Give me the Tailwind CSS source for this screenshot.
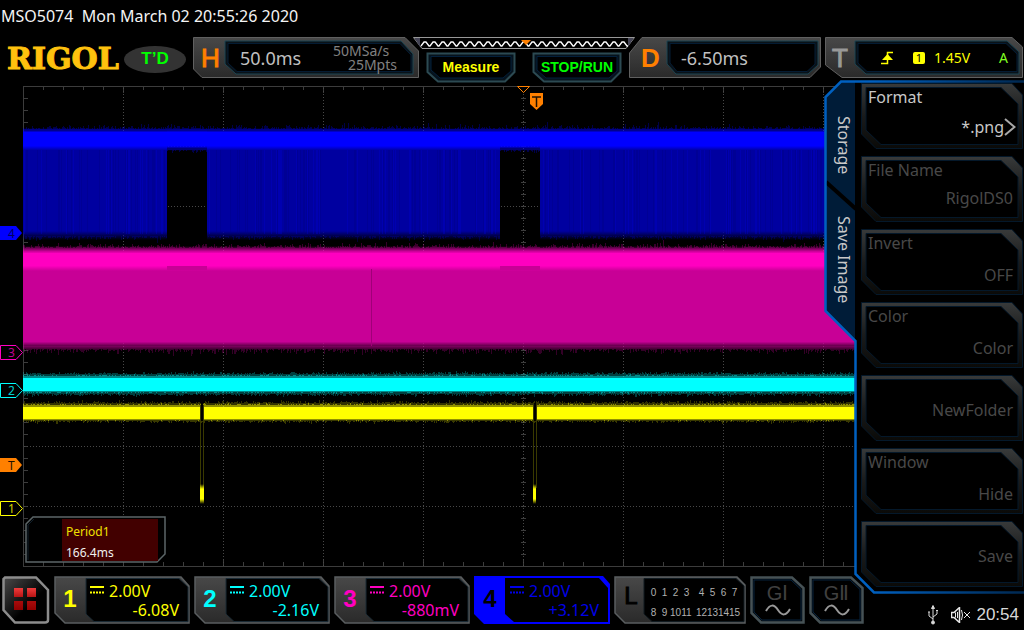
<!DOCTYPE html>
<html lang="en">
<head>
<meta charset="utf-8">
<title>RIGOL MSO5074</title>
<script src="https://cdn.jsdelivr.net/npm/@tailwindcss/browser@4"></script>
</head>
<body class="min-h-screen overflow-hidden bg-black font-['Noto_Sans',sans-serif] text-[#c8c8c8]">

<!-- Shared gradients and frames -->
<svg class="absolute h-0 w-0" aria-hidden="true">
  <defs>
    <linearGradient id="metal" x1="0" y1="0" x2="0" y2="1"><stop offset="0" stop-color="#484848"/><stop offset="1" stop-color="#2a2a2a"/></linearGradient>
    <linearGradient id="frame" x1="0" y1="0" x2="0" y2="1"><stop offset="0" stop-color="#383a3a"/><stop offset=".5" stop-color="#1a1b1b"/><stop offset="1" stop-color="#0a0a08"/></linearGradient>
    <linearGradient id="knob" x1="0" y1="0" x2="1" y2="1"><stop offset="0" stop-color="#4a4a4a"/><stop offset=".6" stop-color="#000"/><stop offset="1" stop-color="#000"/></linearGradient>
    <linearGradient id="tile" x1="0" y1="0" x2="0" y2="1"><stop offset="0" stop-color="#f03c3c"/><stop offset=".45" stop-color="#b01010"/><stop offset="1" stop-color="#900000"/></linearGradient>
    <symbol id="menuFrame" viewBox="0 0 162 66">
      <path d="M.5 .5H151L161.5 12V65.500H15L.5 51Z" fill="url(#frame)" stroke="#04182a"/>
      <path d="M5 4.500H140L157 21V61.500H20L5 47Z" fill="#000" stroke="#04182a"/>
    </symbol>
    <symbol id="chFrame" viewBox="0 0 136 48">
      <path d="M1 1H127L135 10V47H11L1 37Z" fill="url(#metal)" stroke="#5a5e60" stroke-width="1.500"/>
      <path d="M32 2.500H125L134 11V45.500H40L32 38Z" fill="#000" stroke="#1a2a34"/>
    </symbol>
    <symbol id="pill" viewBox="0 0 90 31">
      <path d="M1.500 1.500H88.500V20L79 29.500H12L1.500 20Z" fill="#06121c" stroke="#2c4a52" stroke-width="2"/>
      <path d="M5 4.500H85V19L77 26H14L5 18Z" fill="#000" stroke="#03203c"/>
    </symbol>
    <symbol id="genFrame" viewBox="0 0 55 48">
      <path d="M1.500 1.500H42L53.500 12V46.500H11L1.500 37Z" fill="#05090d" stroke="#465256" stroke-width="2.500"/>
      <path d="M4 4H41L51 13.500V44H12L4 36Z" fill="#000" stroke="#06223c"/>
    </symbol>
    <symbol id="dc" viewBox="0 0 14 8"><path d="M0 1H14" stroke="currentColor" stroke-width="2"/><path d="M0 6.500H14" stroke="currentColor" stroke-width="2" stroke-dasharray="2 1"/></symbol>
    <symbol id="sine" viewBox="0 0 26 12"><path d="M1 7C5 0 9 0 13 6S21 12 25 5" fill="none" stroke="#999" stroke-width="2"/></symbol>
  </defs>
</svg>

<header>
  <h1 class="h-[37px] whitespace-pre px-px pt-1 text-[16px] leading-6 text-[#f4f4f4]">MSO5074  Mon March 02 20:55:26 2020</h1>
  <div class="flex h-[43px] items-start">
    <div class="flex w-[193px] shrink-0 items-center pl-[7px] pt-2">
      <span class="w-[117px] font-['DejaVu_Serif',serif] text-[30px] font-bold leading-7 text-[#ffc20e] [-webkit-text-stroke:1px_#ffc20e]">RIGOL</span>
      <span class="flex h-[27px] w-[62px] items-center justify-center rounded-[50%] bg-[#333] font-['Liberation_Sans',sans-serif] text-[17px] font-bold text-[#00ff00]">T’D</span>
    </div>

    <button class="relative flex h-[41px] w-[226px] shrink-0 items-center text-left">
      <svg class="absolute inset-0 h-full w-full" viewBox="0 0 226 41"><path d="M.5 .5H212L225.500 14V40.500H9L.5 32Z" fill="url(#metal)" stroke="#606060"/><path d="M32 4H208L220 17V37H43L32 27Z" fill="#0a1218" stroke="#1c4452"/><path d="M35 6.500H207L218 18V34.500H44L35 26Z" fill="#000" stroke="#041c34"/></svg>
      <span class="relative w-[47px] pl-2 font-['Liberation_Sans',sans-serif] text-[26px] leading-8 text-[#ff8000] [-webkit-text-stroke:1px_#ff8000]">H</span>
      <span class="relative w-[93px] text-[18px] leading-6 text-[#c0c0c0]">50.0ms</span>
      <span class="relative flex w-[64px] flex-col text-[14px] leading-[14px] text-[#808080]"><span>50MSa/s</span><span class="text-right">25Mpts</span></span>
    </button>

    <div class="relative z-10 -mx-[6px] flex w-[222px] shrink-0 grow flex-col items-center">
      <svg class="h-[12px] w-[222px]" viewBox="0 0 222 12"><path d="M.5 .5H221.500L213 11.500H9Z" fill="#000" stroke="#989898"/><path d="M1.500 1H7V10ZM220.500 1H215V10Z" fill="#445"/><path id="zigzag" fill="none" stroke="#fff" stroke-width="1.300"/><path d="M108 3H118L113 8Z" fill="#ff8000"/></svg>
      <div class="flex w-[196px] justify-between pt-[3px] font-['Liberation_Sans',sans-serif] text-[14px]">
        <button class="relative h-[31px] w-[90px] font-bold text-[#ffff00]"><svg class="absolute inset-0 h-full w-full"><use href="#pill"/></svg><span class="relative">Measure</span></button>
        <button class="relative h-[31px] w-[90px] font-bold text-[#00ff00]"><svg class="absolute inset-0 h-full w-full"><use href="#pill"/></svg><span class="relative">STOP/RUN</span></button>
      </div>
    </div>

    <button class="relative flex h-[41px] w-[192px] shrink-0 items-center text-left">
      <svg class="absolute inset-0 h-full w-full" viewBox="0 0 192 41"><path d="M13 .5H191.500V30L181 40.500H.5V16Z" fill="url(#metal)" stroke="#606060"/><path d="M38 4H189V28L179 37H47L38 27Z" fill="#0a1218" stroke="#1c4452"/><path d="M41 6.500H186V27L178 34.500H48L41 26Z" fill="#000" stroke="#041c34"/></svg>
      <span class="relative w-[52px] pl-3 font-['Liberation_Sans',sans-serif] text-[26px] font-bold leading-8 text-[#ff8000]">D</span>
      <span class="relative text-[18px] leading-6 text-[#c0c0c0]">-6.50ms</span>
    </button>

    <button class="relative ml-1 mr-px flex h-[41px] w-[198px] shrink-0 items-center text-left">
      <svg class="absolute inset-0 h-full w-full" viewBox="0 0 198 41"><path d="M.5 .5H187L197.500 10V40.500H17L.5 28Z" fill="url(#metal)" stroke="#606060"/><path d="M30 4H182L194 15V37H41L30 27Z" fill="#0a1218" stroke="#1c4452"/><path d="M33 6.500H181L192 17V34.500H42L33 26Z" fill="#000" stroke="#041c34"/></svg>
      <span class="relative w-[56px] pl-[7px] font-['Liberation_Sans',sans-serif] text-[26px] leading-8 text-[#999] [-webkit-text-stroke:1px_#999]">T</span>
      <svg class="relative h-[14px] w-[13px]" viewBox="0 0 13 14"><path d="M0 12.500H6.500V1.500H12" fill="none" stroke="#ff0" stroke-width="1.500"/><path d="M1 9L6.500 3L12 9Z" fill="#ff0"/></svg>
      <span class="relative ml-[19px] h-[12px] w-[12px] rounded-[2px] bg-[#ffff00] text-center text-[11px] leading-3 text-black">1</span>
      <span class="relative ml-[9px] w-[65px] text-[14px] leading-5 text-[#ffff00]">1.45V</span>
      <span class="relative text-[14px] leading-5 text-[#80ff20]">A</span>
    </button>
  </div>
</header>

<main class="flex">
  <section class="min-w-0 flex-1">
    <div class="relative">
      <svg id="scope" class="block h-[490px] w-full" viewBox="0 80 855 490" preserveAspectRatio="xMinYMin meet" role="img" aria-label="Waveforms of channels 1 to 4" font-family="Noto Sans, sans-serif" font-size="12">
        <defs>
          <linearGradient id="g4" x1="0" x2="0" y1="128" y2="240" gradientUnits="userSpaceOnUse"><stop offset="0" stop-color="#0000ff" stop-opacity="0"/><stop offset=".04" stop-color="#0000ff"/><stop offset=".16" stop-color="#0000ff"/><stop offset=".2" stop-color="#0000a0"/><stop offset=".92" stop-color="#0000a0"/><stop offset="1" stop-color="#0000a0" stop-opacity="0"/></linearGradient>
          <linearGradient id="g4b" x1="0" x2="0" y1="128" y2="152" gradientUnits="userSpaceOnUse"><stop offset="0" stop-color="#0000ff" stop-opacity="0"/><stop offset=".18" stop-color="#0000ff"/><stop offset=".75" stop-color="#0000ff"/><stop offset=".95" stop-color="#0000ff" stop-opacity="0"/></linearGradient>
          <linearGradient id="g3" x1="0" x2="0" y1="246" y2="350" gradientUnits="userSpaceOnUse"><stop offset="0" stop-color="#ff00c0" stop-opacity="0"/><stop offset=".07" stop-color="#ff00c0"/><stop offset=".19" stop-color="#ff00c0"/><stop offset=".24" stop-color="#c80096"/><stop offset=".92" stop-color="#c80096"/><stop offset="1" stop-color="#c80096" stop-opacity="0"/></linearGradient>
          <linearGradient id="blob" x1="0" x2="0" y1="0" y2="1"><stop offset="0" stop-color="#ff0" stop-opacity="0"/><stop offset=".25" stop-color="#ff0"/><stop offset=".75" stop-color="#ff0"/><stop offset="1" stop-color="#ff0" stop-opacity="0"/></linearGradient>
        </defs>
        <g id="grid" stroke="#3c3c3c" fill="none"></g>
        <path d="M23 128H167V240H23ZM207 128H500V240H207ZM540 128H855V240H540Z" fill="url(#g4)"/>
        <path d="M167 128H207V152H167ZM500 128H540V152H500Z" fill="url(#g4b)"/>
        <g id="streaks"></g>
        <path d="M23 246H855V350H23Z" fill="url(#g3)"/>
        <path d="M167 266H207V270H167ZM500 266H540V270H500Z" fill="#c80096"/>
        <path d="M371.500 269V346" stroke="#a00078"/>
        <path d="M23 378H855V391H23Z" fill="#00ffff"/>
        <path d="M23 407H855V419H23Z" fill="#ffff00"/>
        <g id="noise"></g>
        <path d="M201 403H203V421H201ZM534 403H536V421H534Z" fill="#000"/>
        <path d="M200.500 405V488M203.500 405V488M533.500 405V488M536.500 405V488" stroke="#3a3a00"/>
        <path d="M200 484H204V504H200ZM533 484H536V504H533Z" fill="url(#blob)"/>

        <path d="M0 226H16L22 233L16 240H0Z" fill="#0000ff"/><text x="8" y="238" fill="#000060">4</text>
        <path d="M.5 345.500H16L22.500 352.500L16 359.500H.5Z" fill="#000" stroke="#ff00c0"/><text x="8" y="357" fill="#c00090">3</text>
        <path d="M.5 383.500H16L22.500 390.500L16 397.500H.5Z" fill="#000" stroke="#0ff"/><text x="8" y="395" fill="#00d0d0">2</text>
        <path d="M0 458H16L22 465L16 472H0Z" fill="#ff8000"/><text x="8" y="470" fill="#201000">T</text>
        <path d="M.5 501.500H16L22.500 508.500L16 515.500H.5Z" fill="#000" stroke="#ff0"/><text x="8" y="513" fill="#d0d000">1</text>
        <path d="M517.500 86.500H529.500L523.500 92.500Z" fill="#000" stroke="#ff8000"/>
        <path d="M530 93H543V104L536.500 110L530 104Z" fill="#ff8000"/><path d="M532 97H541M536.500 97V107" stroke="#201000" stroke-width="1.500"/>
      </svg>
      <div class="absolute left-[25px] top-[436px] flex h-[47px] w-[141px] pl-[37px] pt-[3px]">
        <svg class="absolute inset-0 h-full w-full" viewBox="0 0 141 47"><path d="M8 1H140V38L132 46H1V8Z" fill="#000" stroke="#5c6668" stroke-width="1.500"/><path d="M3 44V9L9 3" fill="none" stroke="#10202c"/></svg>
        <div class="relative flex h-[42px] w-[96px] flex-col bg-[#420000] pl-1 pt-[2px] text-[12px] leading-[21px]"><span class="text-[#f0e000]">Period1</span><span class="text-[#f0f0f0]">166.4ms</span></div>
      </div>
    </div>

    <nav class="relative flex gap-1 pl-[2px] pt-[6px]">
      <button aria-label="Menu" class="h-12 w-12 shrink-0"><svg class="h-full w-full" viewBox="0 0 48 48"><path d="M3 1.500H34L46 14V44Q46 46.500 43 46.500H13L1.500 34V3Z" fill="url(#knob)" stroke="#8c8c8c" stroke-width="2.500"/><path d="M12 12H21V21H12ZM25 12H34V21H25ZM12 25H21V34H12ZM25 25H34V34H25Z" fill="url(#tile)"/></svg></button>
      <button class="relative flex h-12 w-[136px] shrink-0 text-[#ffff00]"><svg class="absolute inset-0 h-full w-full"><use href="#chFrame"/></svg><span class="relative w-9 pr-1 text-center font-['Liberation_Sans',sans-serif] text-[24px] font-bold leading-[46px]">1</span><span class="relative flex w-[89px] flex-col pt-[6px] text-[16px] leading-[19px]"><span class="flex items-center gap-[5px]"><svg class="mb-[3px] h-2 w-[14px]"><use href="#dc"/></svg>2.00V</span><span class="text-right">-6.08V</span></span></button>
      <button class="relative flex h-12 w-[136px] shrink-0 text-[#00ffff]"><svg class="absolute inset-0 h-full w-full"><use href="#chFrame"/></svg><span class="relative w-9 pr-1 text-center font-['Liberation_Sans',sans-serif] text-[24px] font-bold leading-[46px]">2</span><span class="relative flex w-[89px] flex-col pt-[6px] text-[16px] leading-[19px]"><span class="flex items-center gap-[5px]"><svg class="mb-[3px] h-2 w-[14px]"><use href="#dc"/></svg>2.00V</span><span class="text-right">-2.16V</span></span></button>
      <button class="relative flex h-12 w-[136px] shrink-0 text-[#ff00c0]"><svg class="absolute inset-0 h-full w-full"><use href="#chFrame"/></svg><span class="relative w-9 pr-1 text-center font-['Liberation_Sans',sans-serif] text-[24px] font-bold leading-[46px]">3</span><span class="relative flex w-[89px] flex-col pt-[6px] text-[16px] leading-[19px]"><span class="flex items-center gap-[5px]"><svg class="mb-[3px] h-2 w-[14px]"><use href="#dc"/></svg>2.00V</span><span class="text-right">-880mV</span></span></button>
      <button class="relative flex h-12 w-[136px] shrink-0 text-[#0000e8]"><svg class="absolute inset-0 h-full w-full" viewBox="0 0 136 48"><path d="M0 0H129L136 8V48H10L0 38Z" fill="#0000ff"/><path d="M31 2H125L134 12V46H40L31 38Z" fill="#000"/></svg><span class="relative w-9 pr-1 text-center font-['Liberation_Sans',sans-serif] text-[24px] font-bold leading-[46px] text-black">4</span><span class="relative flex w-[89px] flex-col pt-[6px] text-[16px] leading-[19px]"><span class="flex items-center gap-[5px]"><svg class="mb-[3px] h-2 w-[14px]"><use href="#dc"/></svg>2.00V</span><span class="text-right">+3.12V</span></span></button>
      <button class="relative flex h-12 w-[132px] shrink-0 font-['Liberation_Sans',sans-serif]">
        <svg class="absolute inset-0 h-full w-full" viewBox="0 0 132 48"><path d="M1 1H123L131 9V47H11L1 37Z" fill="url(#metal)" stroke="#5a5e60" stroke-width="1.500"/><path d="M30 2.500H122L130 10V45.500H38L30 38Z" fill="#000" stroke="#101a20"/></svg>
        <span class="relative w-[34px] text-center text-[24px] leading-[40px] text-black [-webkit-text-stroke:1px_#000]">L</span>
        <span class="relative flex gap-1 pt-2 text-center text-[10px] leading-[17px] text-[#b0b0b0]">
          <span class="grid w-11 grid-cols-4"><span>0</span><span>1</span><span>2</span><span>3</span><span>8</span><span>9</span><span>10</span><span>11</span></span>
          <span class="grid w-11 grid-cols-4"><span>4</span><span>5</span><span>6</span><span>7</span><span>12</span><span>13</span><span>14</span><span>15</span></span>
        </span>
      </button>
      <button class="relative flex h-12 w-[55px] shrink-0 flex-col items-center pt-[6px]"><svg class="absolute inset-0 h-full w-full"><use href="#genFrame"/></svg><span class="relative font-['Liberation_Sans',sans-serif] text-[20px] leading-[22px] text-[#404040]">G<span class="font-['Liberation_Serif',serif]">Ⅰ</span></span><svg class="relative h-[12px] w-[26px]"><use href="#sine"/></svg></button>
      <button class="relative flex h-12 w-[55px] shrink-0 flex-col items-center pt-[6px]"><svg class="absolute inset-0 h-full w-full"><use href="#genFrame"/></svg><span class="relative font-['Liberation_Sans',sans-serif] text-[20px] leading-[22px] text-[#404040]">G<span class="font-['Liberation_Serif',serif]">Ⅱ</span></span><svg class="relative h-[12px] w-[26px]"><use href="#sine"/></svg></button>
    </nav>
  </section>

  <aside class="relative w-[169px] shrink-0">
    <svg class="absolute -left-[31px] top-0 h-[514px] w-[200px]" viewBox="824 80 200 514">
      <defs><linearGradient id="edge" x1="870" x2="1024" y1="0" y2="0" gradientUnits="userSpaceOnUse"><stop offset="0" stop-color="#0060c0"/><stop offset="1" stop-color="#002850"/></linearGradient></defs>
      <path d="M1024 82H841L826 97V311L856 341V574L874 592H1024Z" fill="#000"/>
      <path d="M841 82H855V340L826 311V97Z" fill="#001c38"/>
      <path d="M826 182L856 209" stroke="#000" stroke-width="4"/>
      <path d="M1024 81.500H841L825.500 97V311L855.500 341V574L874 592.500H1024" fill="none" stroke="url(#edge)" stroke-width="2.500"/>
    </svg>
    <div class="absolute -left-6 top-0 flex w-[26px] flex-col pt-[36px] text-[16px] leading-[26px]">
      <button class="h-[58px] whitespace-nowrap [writing-mode:vertical-rl]">Storage</button>
      <button class="mt-[42px] h-[88px] whitespace-nowrap [writing-mode:vertical-rl]">Save Image</button>
    </div>
    <div class="relative ml-[6px] flex w-[162px] flex-col gap-[7px] pb-[7px] pt-[3px] text-[16px] leading-5 text-[#484848]">
      <button class="relative flex h-[66px] flex-col justify-between px-[7px] pb-[12px] pt-1 text-[#c8c8c8]"><svg class="absolute inset-0 h-full w-full"><use href="#menuFrame"/></svg><span class="relative self-start">Format</span><span class="relative flex items-center self-end">*.png<svg class="h-5 w-[12px]" viewBox="0 0 12 20"><path d="M1 2L10.500 10L1 18" fill="none" stroke="#a8a8a8" stroke-width="2"/></svg></span></button>
      <button class="relative flex h-[66px] flex-col justify-between pl-[7px] pr-[10px] pb-[14px] pt-1"><svg class="absolute inset-0 h-full w-full"><use href="#menuFrame"/></svg><span class="relative self-start">File Name</span><span class="relative self-end">RigolDS0</span></button>
      <button class="relative flex h-[66px] flex-col justify-between pl-[7px] pr-[10px] pb-[10px] pt-1"><svg class="absolute inset-0 h-full w-full"><use href="#menuFrame"/></svg><span class="relative self-start">Invert</span><span class="relative self-end">OFF</span></button>
      <button class="relative flex h-[66px] flex-col justify-between pl-[7px] pr-[10px] pb-[10px] pt-1"><svg class="absolute inset-0 h-full w-full"><use href="#menuFrame"/></svg><span class="relative self-start">Color</span><span class="relative self-end">Color</span></button>
      <button class="relative flex h-[66px] flex-col justify-center px-[10px] pt-1"><svg class="absolute inset-0 h-full w-full"><use href="#menuFrame"/></svg><span class="relative self-end">NewFolder</span></button>
      <button class="relative flex h-[66px] flex-col justify-between pl-[7px] pr-[10px] pb-[10px] pt-1"><svg class="absolute inset-0 h-full w-full"><use href="#menuFrame"/></svg><span class="relative self-start">Window</span><span class="relative self-end">Hide</span></button>
      <button class="relative flex h-[66px] flex-col justify-center px-[10px] pt-1"><svg class="absolute inset-0 h-full w-full"><use href="#menuFrame"/></svg><span class="relative self-end">Save</span></button>
    </div>
    <footer class="flex h-[36px] items-center justify-end pr-[5px] pt-[5px] font-['Liberation_Sans',sans-serif]">
      <svg class="mr-[13px] h-[20px] w-[10px]" viewBox="0 0 10 20" fill="none" stroke="#d8d8d8"><path d="M5 1V18M5 14L1 11V7M5 12L9 9V6"/><path d="M3.500 3.500L5 .5L6.500 3.500Z" fill="#d8d8d8"/><circle cx="5" cy="17.500" r="1.500" fill="#d8d8d8"/><path d="M0 7H2M8 5.500H10"/></svg>
      <svg class="mr-[5px] h-[16px] w-[20px]" viewBox="0 0 20 16" fill="none" stroke="#e8e8e8"><path d="M.5 5.500H3L8.500 .5V15.500L3 10.500H.5Z" stroke-width="1.500"/><path d="M4.500 5.500V10.500M6.500 5V11M10.500 3Q12.500 8 10.500 13M13 5L19 11M19 5L13 11"/></svg>
      <time class="text-[17px] leading-5 text-[#d8d8d8]">20:54</time>
    </footer>
  </aside>
</main>

<script>
  const NS = 'http://www.w3.org/2000/svg';
  let seed = 7;
  const rnd = () => (seed = (seed * 16807) % 2147483647) / 2147483647;
  function add(parent, d, attrs) {
    const p = document.createElementNS(NS, 'path');
    p.setAttribute('d', d);
    for (const k in attrs) p.setAttribute(k, attrs[k]);
    document.getElementById(parent).appendChild(p);
  }

  // Graticule: 10 x 8 divisions with minor ticks
  let ticks = 'M23.5 86V566.5M23 86.5H855M23 566.5H855';
  for (let x = 43; x < 855; x += 20) {
    const n = (x - 23) % 100 === 0 ? 7 : 4;
    ticks += `M${x + .5} 86v${n}M${x + .5} 566v-${n}`;
  }
  for (let y = 98; y < 566; y += 12) ticks += `M23 ${y + .5}h5M521 ${y + .5}h5`;
  add('grid', ticks, {});
  let dots = '';
  for (let x = 123; x < 855; x += 100) dots += `M${x + .5} 88V566`;
  for (let y = 146; y < 566; y += 60) dots += `M24 ${y + .5}H855`;
  add('grid', dots, {'stroke-dasharray': '1 2', stroke: '#484848'});

  // Vertical shading inside the channel 4 burst
  for (let x = 24; x < 855; x++) {
    if ((x >= 166 && x < 208) || (x >= 499 && x < 541)) continue;
    const r = rnd();
    if (r < .3) add('streaks', `M${x + .5} 150V234`, {stroke: r < .12 ? '#0000c8' : '#000080', 'stroke-opacity': r < .12 ? .4 : .35});
  }

  // Ragged edges: [y, direction, min height, max extra, colour, opacity]
  const inGap = x => (x >= 167 && x < 207) || (x >= 500 && x < 540);
  const edges = [
    [130, -1, 1, 4, '#0000ff', .28, () => true],
    [236, 1, 0, 4, '#0000c0', .28, x => !inGap(x)],
    [149, 1, 1, 3, '#0000ff', .28, inGap],
    [252, -1, 4, 5, '#ff00c0', .22, () => true],
    [346, 1, 3, 5, '#ff00c0', .2, () => true],
    [378, -1, 4, 2, '#00ffff', .25, () => true], [378, -1, 2, 1, '#00ffff', .4, () => true],
    [391, 1, 3, 2, '#00ffff', .25, () => true], [391, 1, 1, 1, '#00ffff', .4, () => true],
    [407, -1, 4, 2, '#ffff00', .2, () => true], [407, -1, 2, 1, '#ffff00', .45, () => true],
    [419, 1, 2, 2, '#ffff00', .22, () => true], [419, 1, 1, 0, '#ffff00', .45, () => true]
  ];
  for (const [y, dir, min, extra, color, opacity, keep] of edges) {
    let d = '';
    for (let x = 23; x < 855; x++) {
      if (!keep(x)) continue;
      let h = min + Math.floor(rnd() * rnd() * (extra + 1) + .4);
      if (extra > 2 && rnd() > .97) h += 3;
      if (h > 0) d += `M${x + .5} ${y}v${dir * h}`;
    }
    add('noise', d, {stroke: color, 'stroke-opacity': opacity, fill: 'none'});
  }

  // Memory overview wave
  let z = 'M8 9';
  for (let x = 8; x < 208; x += 9) z += `L${x + 3} 5L${x + 5} 5L${x + 8} 9L${x + 9} 9`;
  document.getElementById('zigzag').setAttribute('d', z);
</script>
</body>
</html>
